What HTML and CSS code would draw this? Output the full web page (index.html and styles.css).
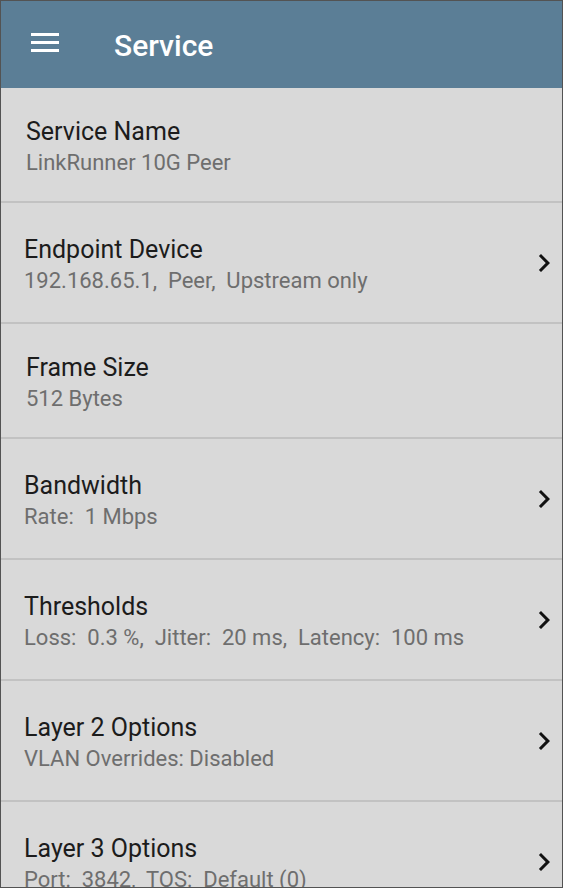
FILE: index.html
```html
<!DOCTYPE html>
<html>
<head>
<meta charset="utf-8">
<link rel="stylesheet" href="styles.css">
</head>
<body>
<div class="screen">
  <header class="appbar">
    <svg class="menu" width="28" height="19" viewBox="0 0 28 19">
      <rect x="0" y="0" width="28" height="3" fill="#fff"/>
      <rect x="0" y="8" width="28" height="3" fill="#fff"/>
      <rect x="0" y="16" width="28" height="3" fill="#fff"/>
    </svg>
    <h1 class="title">Service</h1>
  </header>
  <ul class="list">
    <li class="row row-short plain">
      <div class="text"><div class="label">Service Name</div><div class="value">LinkRunner 10G Peer</div></div>
    </li>
    <li class="row">
      <div class="text"><div class="label">Endpoint Device</div><div class="value">192.168.65.1,  Peer,  Upstream only</div></div>
      <svg class="chev" viewBox="0 0 24 24"><path d="M10 6L8.59 7.41 13.17 12l-4.58 4.59L10 18l6-6z"/></svg>
    </li>
    <li class="row row-short plain">
      <div class="text"><div class="label">Frame Size</div><div class="value">512 Bytes</div></div>
    </li>
    <li class="row">
      <div class="text"><div class="label">Bandwidth</div><div class="value">Rate:  1 Mbps</div></div>
      <svg class="chev" viewBox="0 0 24 24"><path d="M10 6L8.59 7.41 13.17 12l-4.58 4.59L10 18l6-6z"/></svg>
    </li>
    <li class="row">
      <div class="text"><div class="label">Thresholds</div><div class="value">Loss:  0.3 %,  Jitter:  20 ms,  Latency:  100 ms</div></div>
      <svg class="chev" viewBox="0 0 24 24"><path d="M10 6L8.59 7.41 13.17 12l-4.58 4.59L10 18l6-6z"/></svg>
    </li>
    <li class="row">
      <div class="text"><div class="label">Layer 2 Options</div><div class="value">VLAN Overrides: Disabled</div></div>
      <svg class="chev" viewBox="0 0 24 24"><path d="M10 6L8.59 7.41 13.17 12l-4.58 4.59L10 18l6-6z"/></svg>
    </li>
    <li class="row">
      <div class="text"><div class="label">Layer 3 Options</div><div class="value">Port:  3842,  TOS:  Default (0)</div></div>
      <svg class="chev" viewBox="0 0 24 24"><path d="M10 6L8.59 7.41 13.17 12l-4.58 4.59L10 18l6-6z"/></svg>
    </li>
  </ul>
</div>
</body>
</html>
```

FILE: styles.css
```css
* { box-sizing: border-box; }
html, body { margin: 0; padding: 0; }
body {
  width: 563px;
  height: 888px;
  overflow: hidden;
  font-family: Roboto, "Noto Sans", sans-serif;
}
.screen {
  width: 563px;
  height: 888px;
  border: 1px solid #535353;
  background: #d9d9d9;
  overflow: hidden;
  display: flex;
  flex-direction: column;
}
.appbar {
  flex: 0 0 87px;
  height: 87px;
  background: #5b7e96;
  display: flex;
  align-items: center;
  padding-left: 30px;
}
.menu { display: block; margin-top: -4px; }
.title {
  margin: 0 0 0 55px;
  color: #fff;
  font-size: 30px;
  font-weight: 500;
  margin-top: 1px;
}
.list {
  list-style: none;
  margin: 0;
  padding: 0;
}
.row {
  height: 121px;
  border-bottom: 2px solid #c2c2c2;
  display: flex;
  align-items: center;
  padding-left: 23px;
  padding-right: 0;
}
.row-short { height: 115px; }
.plain { padding-left: 25px; }
.text { flex: 1; min-width: 0; padding-top: 7px; }
.label {
  font-size: 25px;
  line-height: 30px;
  color: #1c1c1c;
}
.value {
  font-size: 22px;
  line-height: 32px;
  color: #6e6e6e;
  white-space: pre;
}
.chev {
  width: 36px;
  height: 36px;
  flex: 0 0 36px;
  fill: #111;
}
```
